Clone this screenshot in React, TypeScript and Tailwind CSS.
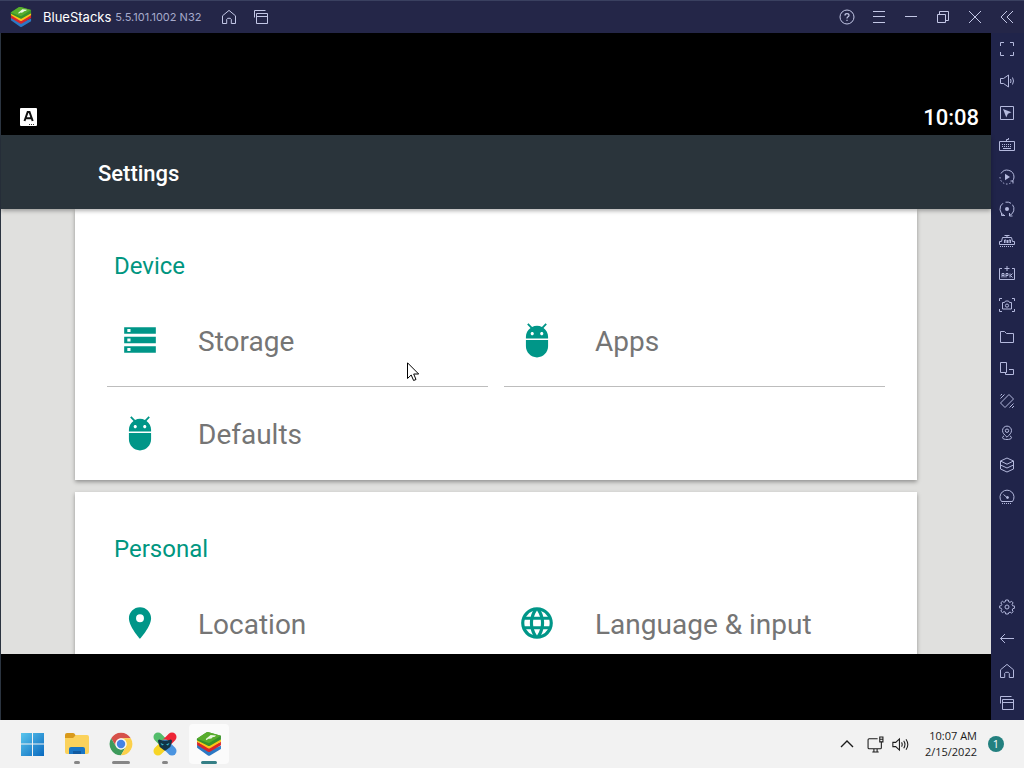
import type { ReactNode } from 'react'
import { MdAdb, MdLanguage, MdPlace, MdStorage } from 'react-icons/md'

function Glyph({ children, size = 16 }: { children: ReactNode; size?: number }) {
  return (
    <svg
      width={size}
      height={size}
      viewBox="0 0 16 16"
      fill="none"
      stroke="currentColor"
      strokeWidth="1"
      aria-hidden="true"
    >
      {children}
    </svg>
  )
}

const homeShape = <path d="M1.5 6.8 8 1.4l6.500 5.400v7.700h-4.200v-4.200l-1-1H6.700l-1 1v4.200H1.500z" />

const recentsShape = (
  <>
    <path d="M1.500 8.500v-7h11" />
    <path d="M3.500 4.500h11v10h-11zM3.500 7.500h11" />
  </>
)

const windowActions = [
  {
    label: 'Help',
    icon: (
      <>
        <circle cx="8" cy="8" r="7" />
        <path d="M6 6.400C6 4 10 4 10 6.400 10 7.900 8 7.800 8 9.400M8 10.700v1.200" strokeWidth="1.200" />
      </>
    ),
  },
  { label: 'Menu', icon: <path d="M2 2.500h12M2 7.500h12M2 13.500h12" /> },
  { label: 'Minimize', icon: <path d="M2 7.500h12" /> },
  { label: 'Restore', icon: <path d="M2.500 5.500h8v8h-8zM4.500 2.500h9v9M4.500 2.500v3M10.500 11.500h3" /> },
  { label: 'Close', icon: <path d="M2 2l12 12M14 2 2 14" /> },
]

const tools = [
  { label: 'Full screen', icon: <path d="M1.500 5V1.500H5M11 1.500h3.500V5M14.500 11v3.500H11M5 14.500H1.500V11" /> },
  {
    label: 'Volume',
    icon: <path d="M1.500 5.500h3L9.500 2v12l-5-3.500h-3zM11.500 6q1 2 0 4M13.500 4.500q2 3.500 0 7" />,
  },
  {
    label: 'Lock cursor',
    icon: (
      <>
        <path d="M1.500 1.500h13v13h-13z" />
        <path d="M4 4l8.500 3.300-3.600 1.500L7.300 12.500z" fill="currentColor" stroke="none" />
      </>
    ),
  },
  {
    label: 'Game controls',
    icon: (
      <>
        <path d="M.5 4.500h15v9H.5zM7.500 4.500v-2h2V1" />
        <path d="M3 7.500h10M3 9.500h10" strokeDasharray="1 1" />
        <path d="M4 11.500h8" />
      </>
    ),
  },
  {
    label: 'Sync operations',
    icon: (
      <>
        <path d="M2 4.500A7 7 0 0 1 15 8M15 8a7 7 0 0 1-1.500 4.300M11.500 12h2.500v2.500" />
        <path d="M1 8a7 7 0 0 0 10.500 6.100" strokeDasharray="1.500 1.800" />
        <path d="M6 4.800 11 8l-5 3.200z" fill="currentColor" stroke="none" />
      </>
    ),
  },
  {
    label: 'Macro recorder',
    icon: (
      <>
        <path d="M5.500 14.500A7 7 0 0 1 4 2.200M6.500 1.200A7 7 0 0 1 12 2.300M13.500 3.700a7 7 0 0 1-3 10.800M2.500 12v2.500h3.500M10.500 12v3h3" />
        <circle cx="8" cy="8" r="2" fill="currentColor" stroke="none" />
      </>
    ),
  },
  {
    label: 'Memory',
    icon: (
      <>
        <path d="M.5 11.500v-3h2l1-4h9l1 4h2v3zM8 4.500V2M5.500 2.500h5" />
        <path d="M5.500 10V7h1.500v3M8.500 7v3M10 10V7h1.500v3" />
        <path d="M1 13.500h14" strokeDasharray="1 1" />
      </>
    ),
  },
  {
    label: 'Install APK',
    icon: (
      <>
        <path d="M3 3.500H.5v11h15v-11H13M8 1v5M5.500 3.500h5" />
        <path d="M3 12.500v-4h2v4M3 10.500h2M7 12.500v-4h2v2H7M11 8.500v4M13.500 8.500l-2 2 2 2" />
      </>
    ),
  },
  {
    label: 'Screenshot',
    icon: (
      <>
        <path d="M.5 4V1.500H3M13 1.500h2.500V4M15.500 12v2.500H13M3 14.500H.5V12" />
        <path d="M3.500 5.500h2l1-1.500h3l1 1.500h2v6.500h-9z" />
        <circle cx="8" cy="8.600" r="1.600" />
      </>
    ),
  },
  { label: 'Media folder', icon: <path d="M1.500 2.500h4l2 2h7v9h-13z" /> },
  { label: 'Rotate', icon: <path d="M1.500 1.500h6v10h-6zM10 8.500h4.500v5h-8V12" /> },
  {
    label: 'Shake',
    icon: <path d="M10 1.500 14.500 6 6 14.500 1.500 10zM1.500 5.500l4-4M1.500 2.500 3 1M10.500 14.500l4-4M13 15l2-2" />,
  },
  {
    label: 'Set location',
    icon: (
      <>
        <path d="M8 12.200C5.500 9.700 3.500 8 3.500 5.600a4.500 4.500 0 0 1 9 0C12.500 8 10.500 9.700 8 12.200z" />
        <circle cx="8" cy="5.700" r="1.700" />
        <path d="M5 11q-1.500.500-1.500 1.700c0 2.400 9 2.400 9 0Q12.500 11.500 11 11" />
      </>
    ),
  },
  {
    label: 'Multi-instance manager',
    icon: <path d="M8 1l6.500 3L8 7.200 1.500 4zM1.500 4v8L8 15l6.500-3V4M1.500 8 8 11l6.500-3" />,
  },
  {
    label: 'Performance',
    icon: (
      <>
        <path d="M2.500 12.500A7 7 0 1 1 13.500 12.500zM8 8.500 4.500 5.500" />
        <circle cx="8.500" cy="8.500" r="1" fill="currentColor" />
        <path d="M3 14.500h10" strokeDasharray="1 1" />
      </>
    ),
  },
]

const navTools = [
  {
    label: 'Settings',
    icon: (
      <>
        <path d="M6.700 1h2.600l.4 1.800 1.300.5 1.600-1 1.500 1.600-1 1.500.6 1.400 1.900.3v2.100l-1.800.5-.6 1.300 1 1.600-1.600 1.500-1.500-1-1.400.6L9.300 15H6.700l-.4-1.800-1.300-.6-1.600 1-1.600-1.500 1-1.600-.6-1.300-1.800-.4V7.100l1.800-.4.6-1.300-1-1.600 1.600-1.500 1.500 1 1.400-.6z" />
        <circle cx="8" cy="8" r="2" />
      </>
    ),
  },
  { label: 'Back', icon: <path d="M15 7.500H1.500M6 3 1.500 7.500 6 12" /> },
  { label: 'Home', icon: homeShape },
  { label: 'Recent apps', icon: recentsShape },
]

const sections = [
  {
    title: 'Device',
    items: [
      { label: 'Storage', Icon: MdStorage, divider: true },
      { label: 'Apps', Icon: MdAdb, divider: true },
      { label: 'Defaults', Icon: MdAdb, divider: false },
    ],
  },
  {
    title: 'Personal',
    items: [
      { label: 'Location', Icon: MdPlace, divider: true },
      { label: 'Language & input', Icon: MdLanguage, divider: true },
    ],
  },
]

function BlueStacksLogo({ size }: { size: number }) {
  return (
    <svg width={size} height={size} viewBox="0 0 24 24" aria-hidden="true">
      <path d="M1 15.500 11 22.500q1 .6 2 0l10-6v-3L12 18 1 12.500z" fill="#2c79c4" />
      <path d="M1 13l10 6.200q1 .5 2 0l10-6V10L12 15 1 10z" fill="#d9262b" />
      <path d="M1 10l10 6q1 .5 2 0l10-6V7.500L12 12 1 7.500z" fill="#fbc417" />
      <path d="M.8 7.200 9.500 1.400q1-.6 2.200-.3L23 4.300v3.500L13 13.500q-1 .6-2 0L.8 8.500z" fill="#37932b" />
      <path d="M.8 7.200 9.500 1.400q1-.6 2.200-.3L23 4.300l-10 6.400q-1 .5-2 .1z" fill="#58ad2c" />
      <path d="M9 7.300 13.500 3.600l5 .5q-.5 1.500-3.200 1.600-.7 1.800-3.800 1.500L9.500 8.500z" fill="#eaf7df" />
    </svg>
  )
}

function WindowsLogo() {
  return (
    <svg width="24" height="24" viewBox="0 0 24 24" aria-hidden="true">
      <defs>
        <linearGradient id="win" x1="0" y1="0" x2="24" y2="24" gradientUnits="userSpaceOnUse">
          <stop offset="0" stopColor="#5cc8ee" />
          <stop offset="1" stopColor="#0867be" />
        </linearGradient>
      </defs>
      <path d="M0 1h11v10.500H0zM12 1h11v10.500H12zM0 12.500h11V24H0zM12 12.500h11V24H12z" fill="url(#win)" />
    </svg>
  )
}

function FolderLogo() {
  return (
    <svg width="26" height="24" viewBox="0 0 26 24" aria-hidden="true">
      <path d="M1 3q0-2 2-2h6q1 0 1.600.8L12 4v4H1z" fill="#d99a1c" />
      <path d="M1 6h8l3-3h11q2 0 2 2v15q0 2-2 2H3q-2 0-2-2z" fill="#fbd25c" />
      <path d="M5 22v-5q0-2 2-2h12q2 0 2 2v5z" fill="#1976c5" />
      <path d="M9 19h8v3H9z" fill="#115aa0" />
    </svg>
  )
}

function ChromeLogo() {
  return (
    <svg width="24" height="24" viewBox="0 0 24 24" aria-hidden="true">
      <circle cx="12" cy="12" r="11.300" fill="#fff" />
      <path d="M2.200 6.300a11.300 11.300 0 0 1 19.600 0H12a5.700 5.700 0 0 0-4.900 8.500z" fill="#d6514a" />
      <path d="M2.200 6.300a11.300 11.300 0 0 0 9.800 17l4.900-8.500a5.700 5.700 0 0 1-9.800 0z" fill="#3d9a5b" />
      <path d="M21.800 6.300a11.300 11.300 0 0 1-9.800 17l4.900-8.500A5.700 5.700 0 0 0 12 6.300z" fill="#fbd04b" />
      <circle cx="12" cy="12" r="5.400" fill="#f4f4f4" />
      <circle cx="12" cy="12" r="4.200" fill="#4583e4" />
    </svg>
  )
}

function MultiInstanceLogo() {
  return (
    <svg width="26" height="26" viewBox="0 0 26 26" aria-hidden="true">
      <g strokeWidth="9" strokeLinecap="round">
        <path d="M6 6l7 7" stroke="#53bd6b" />
        <path d="M20 6l-7 7" stroke="#ee2536" />
        <path d="M6 20l7-7" stroke="#f7d526" />
        <path d="M20 20l-7-7" stroke="#4a94e0" />
      </g>
      <path d="M7.500 10q5.500 2.500 11 0l-1.500 5-4 3-4-3z" fill="#123447" stroke="#123447" strokeWidth="3" strokeLinejoin="round" />
      <path d="M8.500 12l3.500 1.500-2 1zM17.500 12 14 13.500l2 1z" fill="#36b5c9" />
    </svg>
  )
}

const taskbarApps = [
  { label: 'Start', icon: <WindowsLogo />, tile: '', mark: '' },
  { label: 'File Explorer', icon: <FolderLogo />, tile: '', mark: 'w-1.5 bg-[#868686]' },
  { label: 'Google Chrome', icon: <ChromeLogo />, tile: '', mark: 'w-[18px] bg-[#868686]' },
  { label: 'BlueStacks Multi-Instance', icon: <MultiInstanceLogo />, tile: '', mark: 'w-1.5 bg-[#868686]' },
  { label: 'BlueStacks', icon: <BlueStacksLogo size={26} />, tile: 'bg-[#fbfbfb]', mark: 'w-4 bg-[#347f86]' },
]

function TitleBar() {
  return (
    <header className="flex h-[33px] shrink-0 items-center border-t border-[#3a4060] bg-[#242648] pl-2.5 text-[#c3c7e6]">
      <BlueStacksLogo size={22} />
      <h1 className="ml-[11px] font-['Inter'] text-[13px] leading-5 text-white">BlueStacks</h1>
      <span className="ml-1 font-['Inter'] text-[11px] leading-5 text-[#a6aacb]">5.5.101.1002 N32</span>
      <div className="ml-3 flex">
        <button aria-label="Home" className="flex size-8 items-center justify-center">
          <Glyph>{homeShape}</Glyph>
        </button>
        <button aria-label="Recent apps" className="flex size-8 items-center justify-center">
          <Glyph>{recentsShape}</Glyph>
        </button>
      </div>
      <div className="ml-auto flex pr-px">
        {windowActions.map((a) => (
          <button key={a.label} aria-label={a.label} className="flex size-8 items-center justify-center">
            <Glyph>{a.icon}</Glyph>
          </button>
        ))}
        <button aria-label="Collapse sidebar" className="flex size-8 items-center justify-center">
          <Glyph>
            <path d="M8 2 2 8l6 6M14 2 8 8l6 6" />
          </Glyph>
        </button>
      </div>
    </header>
  )
}

function ToolButton({ label, icon }: { label: string; icon: ReactNode }) {
  return (
    <button aria-label={label} className="flex size-8 items-center justify-center">
      <Glyph>{icon}</Glyph>
    </button>
  )
}

function SideBar() {
  return (
    <aside className="flex w-[33px] shrink-0 flex-col bg-[#20244a] pb-px text-[#b4b9dd]">
      {tools.map((t) => (
        <ToolButton key={t.label} label={t.label} icon={t.icon} />
      ))}
      <div className="mt-auto">
        {navTools.map((t) => (
          <ToolButton key={t.label} label={t.label} icon={t.icon} />
        ))}
      </div>
    </aside>
  )
}

function SettingsScreen() {
  return (
    <main className="flex min-w-0 flex-1 flex-col border-l border-[#2b3440] bg-black font-['Roboto']">
      <div className="flex h-[102px] shrink-0 items-end justify-between pr-3 pb-[3px] pl-[19px] text-white">
        <svg width="17" height="18" viewBox="0 0 17 18" className="mb-1.5" role="img" aria-label="Keyboard">
          <rect width="17" height="18" rx="1" fill="#fff" />
          <path d="M4.500 13 7.700 4h1.800l3.200 9M5.800 10.200h5.500" fill="none" stroke="#111" strokeWidth="2" />
          <path d="M9 16.500h6" stroke="#333" strokeDasharray="1 1" />
        </svg>
        <time className="text-[22px] leading-7 font-medium">10:08</time>
      </div>

      <div className="z-10 flex h-[74px] shrink-0 items-center bg-[#2a343b] pt-[3px] pl-[97px] shadow-[0_2px_4px_rgba(0,0,0,0.3)]">
        <h2 className="text-[22px] leading-7 font-medium text-white">Settings</h2>
      </div>

      <div className="relative flex min-h-0 flex-1 flex-col gap-3 overflow-hidden bg-[#e0e0de] px-[74px]">
        {sections.map((s) => (
          <section key={s.title} className="shrink-0 bg-white px-8 shadow-[0_2px_4px_rgba(0,0,0,0.35)]">
            <h3 className="flex h-[85px] items-center px-[7px] pt-7 text-[24px] leading-7 text-[#009680]">{s.title}</h3>
            <div className="grid grid-cols-2 gap-x-4">
              {s.items.map(({ label, Icon, divider }) => (
                <button
                  key={label}
                  className={`flex h-[93px] items-center gap-[39px] border-b pl-3.5 text-[28px] leading-8 text-[#757575] ${
                    divider ? 'border-[#bdbdbd]' : 'border-transparent'
                  }`}
                >
                  <Icon className="size-[38px] shrink-0 text-[#009688]" />
                  <span className="pt-1">{label}</span>
                </button>
              ))}
            </div>
          </section>
        ))}

        {/* mouse pointer */}
        <svg
          width="13"
          height="20"
          viewBox="0 0 13 20"
          className="absolute top-[153px] left-[406px]"
          aria-hidden="true"
        >
          <path d="M.5.800v15.700l3.700-3.500 2.400 5.500 2.400-1L6.700 12h5z" fill="#fff" stroke="#000" />
        </svg>
      </div>

      <div className="h-[66px] shrink-0" />
    </main>
  )
}

function TaskBar() {
  return (
    <footer className="flex h-12 shrink-0 items-center justify-between bg-[#f2f2f2] pr-5 pl-[13px] text-[#1b1b1b]">
      <nav className="flex gap-1">
        {taskbarApps.map((app) => (
          <button
            key={app.label}
            aria-label={app.label}
            className={`relative flex size-10 items-center justify-center rounded ${app.tile}`}
          >
            {app.icon}
            {app.mark && (
              <span className={`absolute bottom-0 left-1/2 h-[3px] -translate-x-1/2 rounded-full ${app.mark}`} />
            )}
          </button>
        ))}
      </nav>
      <div className="flex items-center">
        <button aria-label="Show hidden icons" className="flex h-8 w-7 items-center justify-center">
          <Glyph>
            <path d="M2 11l6-6 6 6" strokeWidth="1.400" />
          </Glyph>
        </button>
        <button aria-label="Network and volume" className="flex h-8 items-center gap-2 px-1.5">
          <Glyph size={17}>
            <path d="M10 2.500H2q-1 0-1 1V11q0 1 1 1h10.500q1 0 1-1V7.500M5 15h6M6.500 12v3M9.500 12v3M12 1h3v4.500h-3zM13.500 5.500V8M12 3h3" />
          </Glyph>
          <Glyph size={17}>
            <path d="M.8 6h2.700L7 2.800v10.400L3.500 10H.8zM9 6q1.200 2 0 4M11 4.500q2.400 3.500 0 7M13.200 3q3.400 5 0 10" />
          </Glyph>
        </button>
        <div className="ml-2.5 text-right font-['Open_Sans'] text-[11px] leading-4">
          <p>10:07 AM</p>
          <p>2/15/2022</p>
        </div>
        <button
          aria-label="1 notification"
          className="ml-[11px] flex size-4 items-center justify-center rounded-full bg-[#23807f] font-['Open_Sans'] text-[11px] leading-4 text-white"
        >
          1
        </button>
      </div>
    </footer>
  )
}

export default function App() {
  return (
    <div className="flex h-screen flex-col overflow-hidden">
      <TitleBar />
      <div className="flex min-h-0 flex-1 bg-black">
        <SettingsScreen />
        <SideBar />
      </div>
      <TaskBar />
    </div>
  )
}
